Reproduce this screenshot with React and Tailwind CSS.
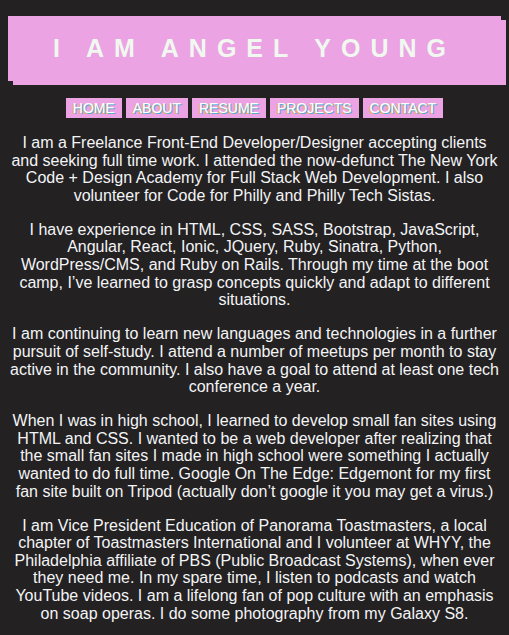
import React from 'react';

const links = ['HOME', 'ABOUT', 'RESUME', 'PROJECTS', 'CONTACT'];

const paragraphs = [
  'I am a Freelance Front-End Developer/Designer accepting clients and seeking full time work. I attended the now-defunct The New York Code + Design Academy for Full Stack Web Development. I also volunteer for Code for Philly and Philly Tech Sistas.',
  'I have experience in HTML, CSS, SASS, Bootstrap, JavaScript, Angular, React, Ionic, JQuery, Ruby, Sinatra, Python, WordPress/CMS, and Ruby on Rails. Through my time at the boot camp, I\u2019ve learned to grasp concepts quickly and adapt to different situations.',
  'I am continuing to learn new languages and technologies in a further pursuit of self-study. I attend a number of meetups per month to stay active in the community. I also have a goal to attend at least one tech conference a year.',
  'When I was in high school, I learned to develop small fan sites using HTML and CSS. I wanted to be a web developer after realizing that the small fan sites I made in high school were something I actually wanted to do full time. Google On The Edge: Edgemont for my first fan site built on Tripod (actually don\u2019t google it you may get a virus.)',
  'I am Vice President Education of Panorama Toastmasters, a local chapter of Toastmasters International and I volunteer at WHYY, the Philadelphia affiliate of PBS (Public Broadcast Systems), when ever they need me. In my spare time, I listen to podcasts and watch YouTube videos. I am a lifelong fan of pop culture with an emphasis on soap operas. I do some photography from my Galaxy S8.',
];

// About page
export default function App() {
  return (
    <div className="min-h-screen bg-[#232122] px-2 pt-4 font-['Liberation_Sans',Arial,sans-serif]">
      <header className="flex h-[65px] items-center justify-center bg-[#eba3e4] shadow-[5px_4px_0_#eba3e4]">
        <h1 className="text-[25px] font-bold tracking-[10px] text-[#f1f8ef]">I AM ANGEL YOUNG</h1>
      </header>

      <nav className="mt-[17px] flex justify-center gap-1">
        {links.map((link) => (
          <a
            key={link}
            href="#"
            className="h-5 bg-[#eba3e4] px-[7px] text-[14px] leading-5 text-white [text-shadow:1px_1px_0_#5aa8d8,-1px_1px_0_#e8b060]"
          >
            {link}
          </a>
        ))}
      </nav>

      <main className="text-center text-[16px] leading-[17.6px] text-[#f3f4f6]">
        {paragraphs.map((p, i) => (
          <p key={i} className={i === 0 ? 'mt-4' : 'mt-[16.5px]'}>
            {p}
          </p>
        ))}
      </main>
    </div>
  );
}
